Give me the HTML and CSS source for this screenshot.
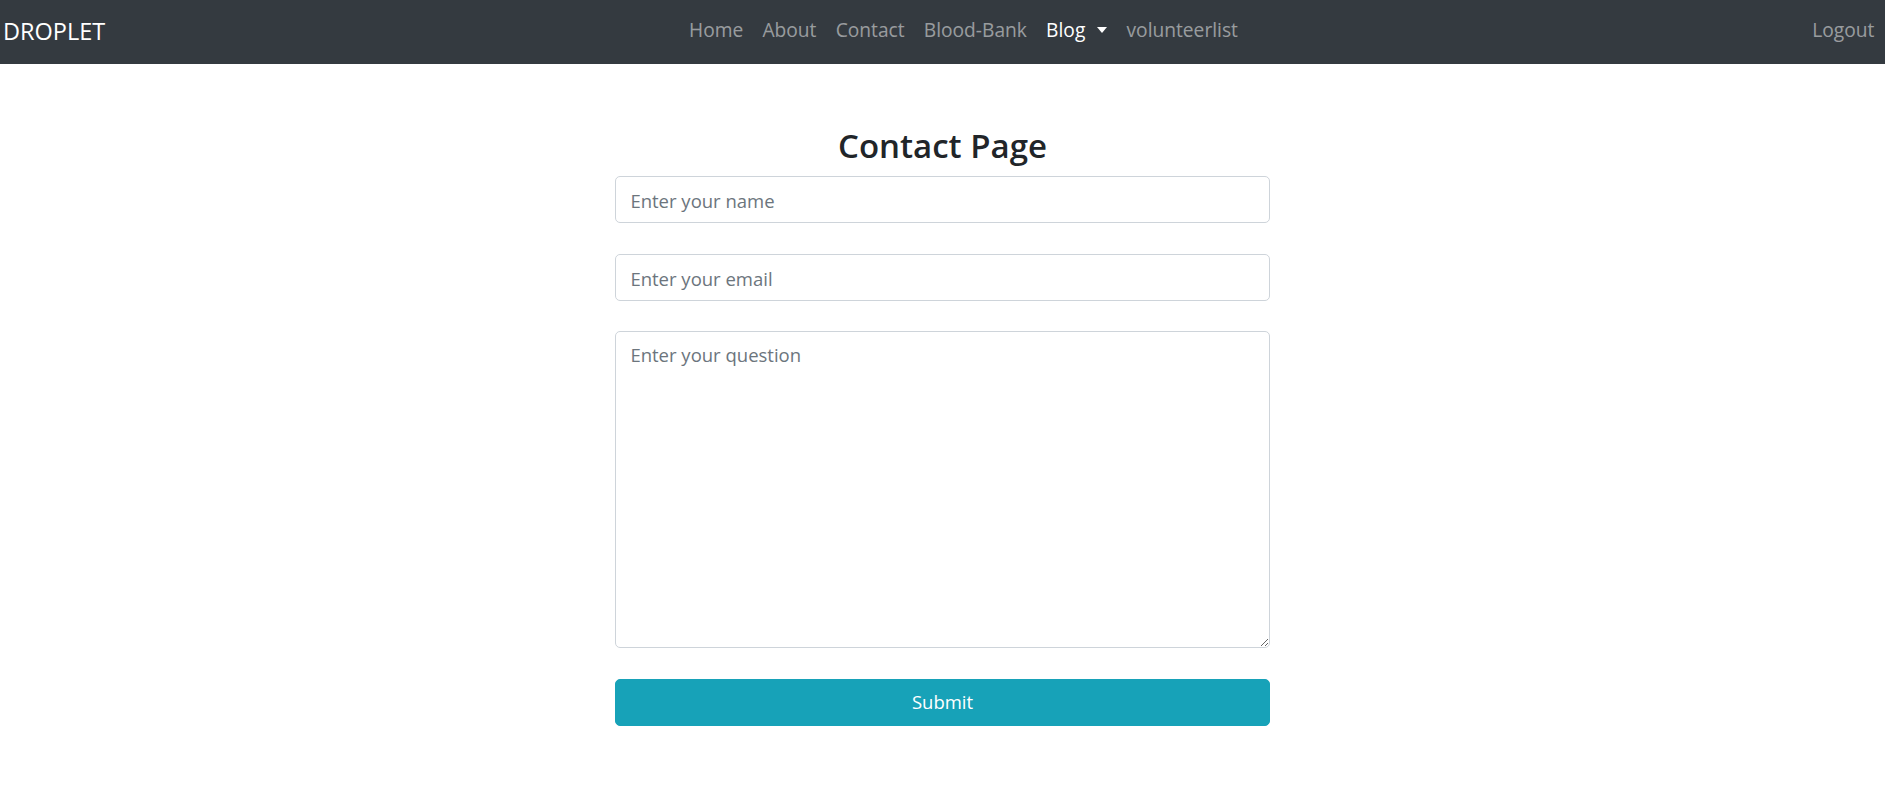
FILE: index.html
```html
<!DOCTYPE html>
<html lang="en">
<head>
<meta charset="utf-8">
<title>Contact Page</title>
<link rel="stylesheet" href="styles.css">
</head>
<body>
<nav class="navbar">
  <a class="brand" href="#">DROPLET</a>
  <div class="nav-collapse">
    <ul class="nav-main">
      <li><a class="nav-link" href="#">Home</a></li>
      <li><a class="nav-link" href="#">About</a></li>
      <li><a class="nav-link" href="#">Contact</a></li>
      <li><a class="nav-link" href="#">Blood-Bank</a></li>
      <li><a class="nav-link active dropdown-toggle" href="#">Blog</a></li>
      <li><a class="nav-link" href="#">volunteerlist</a></li>
    </ul>
    <ul class="nav-right">
      <li><a class="nav-link" href="#">Logout</a></li>
    </ul>
  </div>
</nav>
<main class="contact">
  <h2 class="contact-title">Contact Page</h2>
  <form class="contact-form">
    <input class="form-control" type="text" placeholder="Enter your name">
    <input class="form-control" type="email" placeholder="Enter your email">
    <textarea class="form-control form-textarea" placeholder="Enter your question"></textarea>
    <button class="btn-submit" type="button">Submit</button>
  </form>
</main>
</body>
</html>
```
FILE: styles.css
```css
* { box-sizing: border-box; }
html, body { margin: 0; padding: 0; }
body {
  font-family: "Open Sans", "Noto Sans", "Liberation Sans", sans-serif;
  font-size: 18.5px;
  color: #212529;
  background: #fff;
}
.navbar {
  display: flex;
  align-items: center;
  height: 64px;
  background: #343a40;
  padding: 0 1px 4px 3px;
}
.brand {
  color: #fff;
  text-decoration: none;
  font-size: 23.5px;
  line-height: 30px;
  margin-right: 19px;
  padding-top: 2px;
}
.nav-collapse {
  flex: 1;
  display: flex;
  align-items: center;
}
.nav-main, .nav-right {
  list-style: none;
  margin: 0;
  padding: 0;
  display: flex;
}
.nav-main { margin: 0 auto; }
.nav-link {
  display: block;
  padding: 0 9.6px;
  font-size: 19.2px;
  line-height: 28px;
  color: rgba(255, 255, 255, 0.5);
  text-decoration: none;
}
.nav-link.active { color: #fff; }
.dropdown-toggle::after {
  content: "";
  display: inline-block;
  margin-left: 12px;
  vertical-align: 4px;
  border-top: 6px solid #fff;
  border-left: 5.5px solid transparent;
  border-right: 5.5px solid transparent;
}
.contact {
  width: 655px;
  margin: 0 auto;
  padding-top: 61px;
}
.contact-title {
  margin: 0 0 9px;
  text-align: center;
  font-size: 33px;
  line-height: 42px;
  font-weight: 600;
  color: #212529;
}
.contact-form {
  display: flex;
  flex-direction: column;
  gap: 30.5px;
}
.form-control {
  display: block;
  width: 100%;
  height: 47px;
  padding: 8px 14.4px 6px;
  font-family: inherit;
  font-size: 18.5px;
  line-height: 28px;
  color: #495057;
  background: #fff;
  border: 1px solid #ced4da;
  border-radius: 5px;
  margin: 0;
}
.form-control::placeholder { color: #6c757d; opacity: 1; }
.form-textarea {
  height: 317px;
  padding-top: 9px;
  resize: vertical;
}
.btn-submit {
  display: block;
  width: 100%;
  height: 47px;
  border: 1px solid #17a2b8;
  border-radius: 5px;
  background: #17a2b8;
  color: #fff;
  font-family: inherit;
  font-size: 18.5px;
  line-height: 28px;
  padding: 0;
}
```
